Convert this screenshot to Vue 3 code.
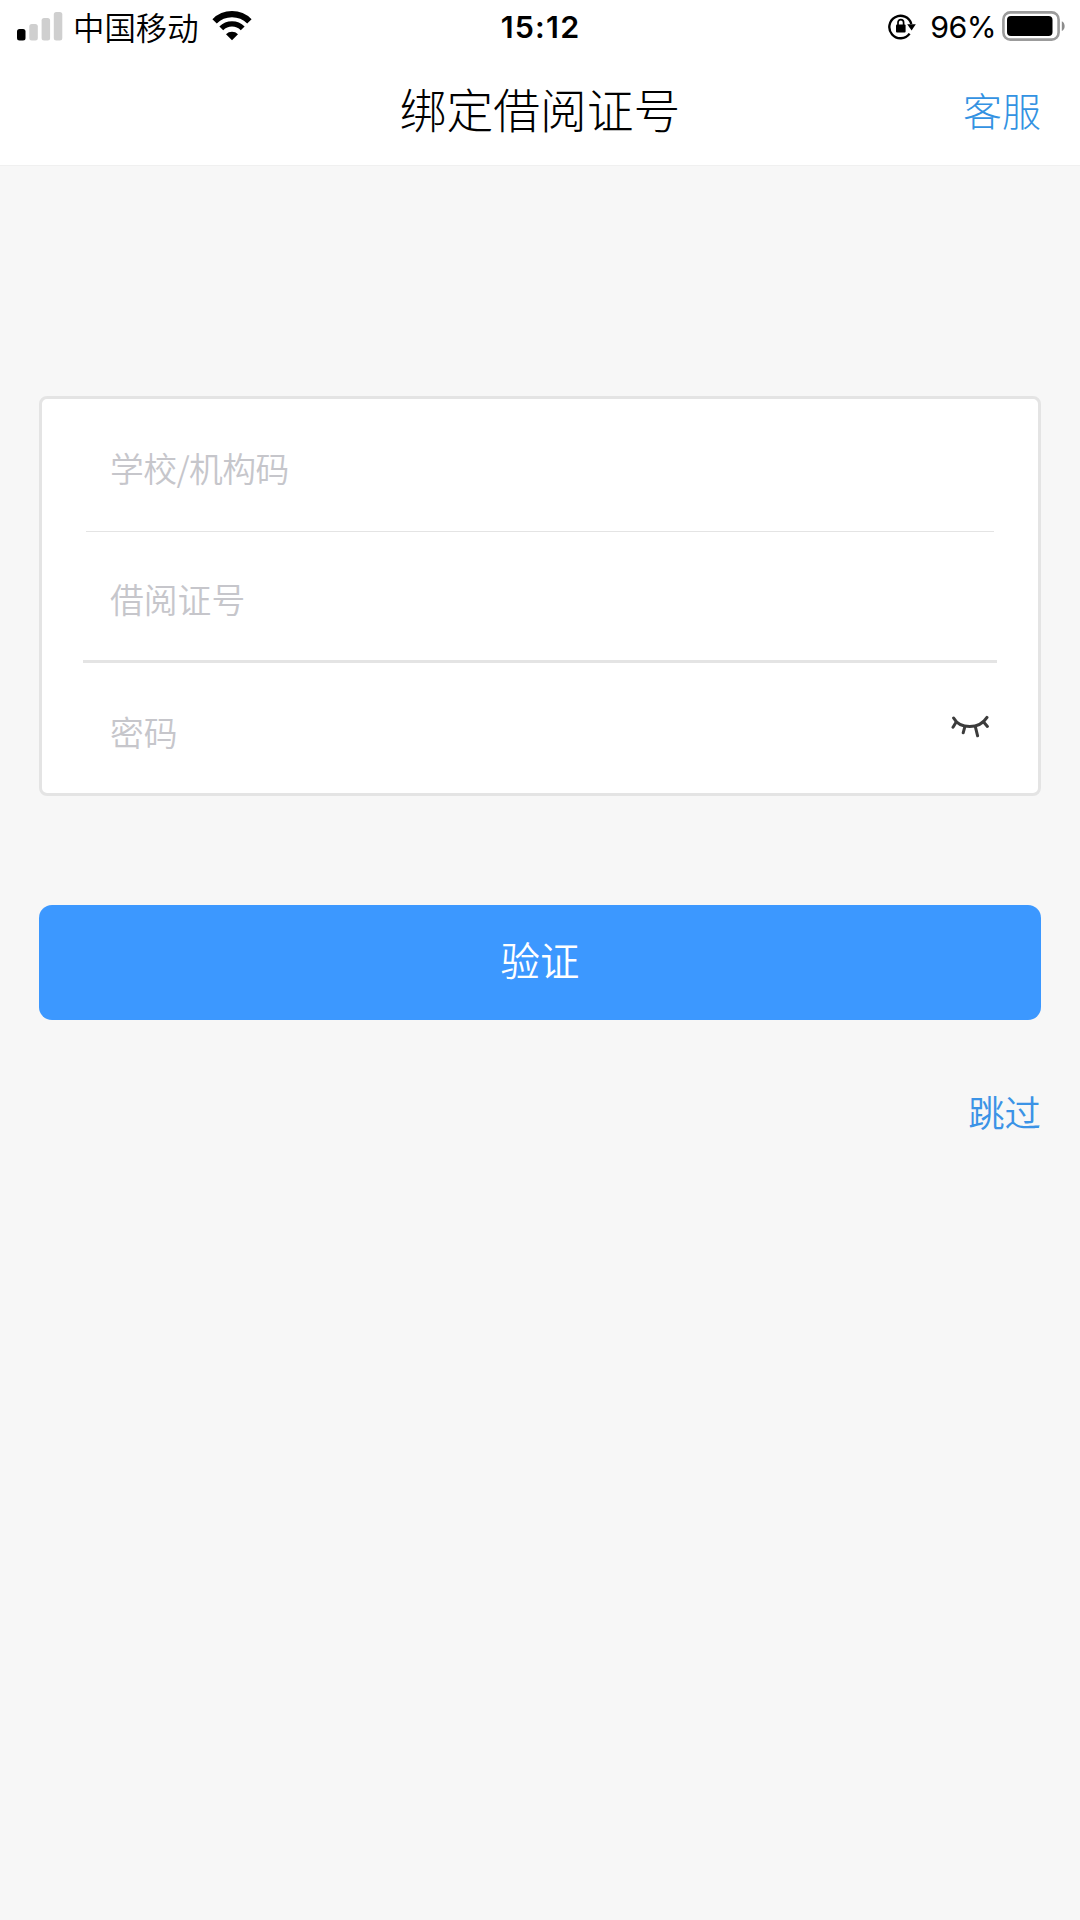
<template>
  <div class="page">
    <header class="top">
      <div class="status-bar">
        <div class="status-left">
          <svg class="signal" width="46" height="29" viewBox="0 0 46 29">
            <rect x="0" y="17" width="8.5" height="11.5" rx="2.5" fill="#000" />
            <rect x="12.3" y="12" width="8.5" height="16.5" rx="2.5" fill="#cfcfcf" />
            <rect x="24.6" y="6" width="8.5" height="22.5" rx="2.5" fill="#cfcfcf" />
            <rect x="36.8" y="0" width="8.5" height="28.5" rx="2.5" fill="#cfcfcf" />
          </svg>
          <span class="carrier">中国移动</span>
          <svg class="wifi" width="40" height="30" viewBox="0 0 40 30">
            <path d="M2.6 10.4a24.6 24.6 0 0 1 34.8 0" fill="none" stroke="#000" stroke-width="6.2" />
            <path d="M9.3 17.4a15 15 0 0 1 21.4 0" fill="none" stroke="#000" stroke-width="5.4" />
            <path d="M20 29.2l-6-6a8.5 8.5 0 0 1 12 0z" fill="#000" />
          </svg>
        </div>
        <span class="time">15:12</span>
        <div class="status-right">
          <svg class="lock" width="28" height="28" viewBox="0 0 28 28">
            <path d="M21.6 20.6A11.2 11.2 0 1 1 23.3 11" fill="none" stroke="#000" stroke-width="2.4" />
            <path d="M19.2 11.2h8.6l-4.2 6.2z" fill="#000" />
            <rect x="8" y="11.5" width="9.6" height="8" rx="1" fill="#000" />
            <path d="M10 12V9.4a2.8 2.8 0 0 1 5.6 0V12" fill="none" stroke="#000" stroke-width="1.7" />
          </svg>
          <span class="percent">{{ battery }}%</span>
          <svg class="battery" width="64" height="30" viewBox="0 0 64 30">
            <rect x="1.4" y="1.4" width="55.2" height="27.2" rx="7" fill="none" stroke="#9b9b9b" stroke-width="2.6" />
            <rect x="5" y="5" width="45.5" height="20" rx="4" fill="#000" />
            <path d="M59.8 10.2c3.8 1.6 3.8 8.2 0 9.8z" fill="#8c8c8c" />
          </svg>
        </div>
      </div>
      <nav class="nav-bar">
        <h1 class="title">绑定借阅证号</h1>
        <a class="service">客服</a>
      </nav>
    </header>

    <form class="card" @submit.prevent>
      <div class="field">
        <input v-model="orgCode" class="org" type="text" placeholder="学校/机构码" />
      </div>
      <div class="line thin"></div>
      <div class="field">
        <input v-model="cardNo" type="text" placeholder="借阅证号" />
      </div>
      <div class="line"></div>
      <div class="field">
        <input v-model="password" :type="showPassword ? 'text' : 'password'" placeholder="密码" />
        <svg class="eye" width="38" height="24" viewBox="0 0 38 24" @click="showPassword = !showPassword">
          <g fill="none" stroke="#3c3c3c" stroke-width="3" stroke-linecap="round">
            <path d="M2.6 3C9 14.3 28 14.8 36 2.4" />
            <path d="M5.2 7L2 12.2M13.8 11.8L12.2 17.8M24.4 11.8L26.6 20.8M32.6 7l3.8 4.4" />
          </g>
        </svg>
      </div>
    </form>

    <button class="verify">验证</button>
    <a class="skip">跳过</a>
  </div>
</template>

<script setup>
import { ref } from 'vue';

const battery = ref(96);
const orgCode = ref('');
const cardNo = ref('');
const password = ref('');
const showPassword = ref(false);
</script>

<style>
body {
  background: #f7f7f7;
}
</style>

<style scoped>
.page {
  display: flex;
  flex-direction: column;
  min-height: 1920px;
  background: #f7f7f7;
  font-family: "Noto Sans CJK SC", sans-serif;
  font-weight: 350;
}

.top {
  box-sizing: border-box;
  height: 166px;
  background: #fff;
  border-bottom: 1px solid #f0f0f0;
}

.status-bar {
  display: grid;
  grid-template-columns: 1fr auto 1fr;
  align-items: center;
  height: 54px;
  padding: 0 14px 0 17px;
  color: #000;
}

.status-left,
.status-right {
  display: flex;
  align-items: center;
}

.status-right {
  justify-content: flex-end;
}

.signal {
  margin-top: -2px;
}

.carrier {
  margin-left: 10px;
  font-size: 31.4px;
  line-height: 54px;
}

.wifi {
  margin-left: 13px;
  margin-top: -3px;
}

.time {
  margin-right: 2px;
  padding-bottom: 1px;
  font-family: Inter, sans-serif;
  font-size: 30.5px;
  font-weight: 600;
  letter-spacing: 1.2px;
}

.percent {
  margin-left: 14px;
  font-family: Inter, sans-serif;
  font-size: 30.4px;
  font-weight: 400;
  letter-spacing: -0.6px;
}

.battery {
  margin-left: 6px;
  margin-top: -3px;
}

.nav-bar {
  display: grid;
  grid-template-columns: 1fr auto 1fr;
  align-items: center;
  height: 108px;
  padding: 0 39px;
}

.title {
  grid-column: 2;
  margin: 0;
  font-size: 46.8px;
  font-weight: 300;
  line-height: 108px;
  color: #000;
}

.service {
  justify-self: end;
  padding-top: 1px;
  font-size: 39px;
  font-weight: 300;
  color: #3392e2;
}

.card {
  box-sizing: border-box;
  height: 400px;
  margin: 230px 39px 0;
  border: 3px solid #e4e4e4;
  border-radius: 8px;
  background: #fff;
}

.field {
  display: flex;
  align-items: center;
  height: 132px;
  padding: 0 49px 0 68px;
}

.field + .thin + .field {
  height: 128px;
}

.field input {
  flex: 1;
  min-width: 0;
  padding: 4px 0 0;
  border: none;
  outline: none;
  background: transparent;
  font-family: inherit;
  font-size: 33.8px;
  font-weight: 350;
  color: #333;
}

.field input.org {
  letter-spacing: -0.6px;
}

.field input::placeholder {
  color: #c6c6cb;
  opacity: 1;
}

.line {
  height: 3px;
  margin: 0 41px;
  background: #e4e4e4;
}

.line.thin {
  height: 1px;
  margin: 0 44px;
}

.eye {
  margin-top: -5px;
}

.verify {
  height: 115px;
  margin: 109px 39px 0;
  padding: 0 0 9px;
  border: none;
  border-radius: 13px;
  background: #3c98ff;
  color: #fff;
  font-family: inherit;
  font-size: 39.4px;
  font-weight: 350;
}

.skip {
  align-self: flex-end;
  margin: 65px 39px 0 0;
  font-size: 36.4px;
  line-height: 52px;
  color: #3b93e6;
}
</style>
